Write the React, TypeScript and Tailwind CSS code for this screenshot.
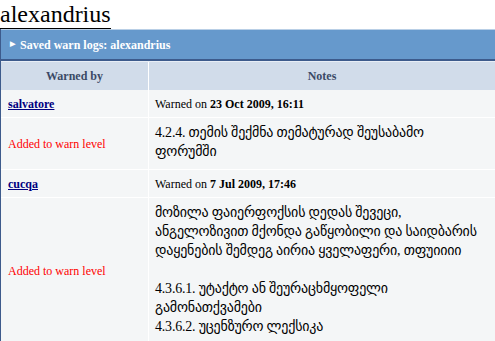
import React from 'react';

type Log = {
  user: string;
  date: string;
  notes: string[];
};

// note lines are kept as they wrap on the original page
const logs: Log[] = [
  {
    user: 'salvatore',
    date: '23 Oct 2009, 16:11',
    notes: ['4.2.4. თემის შექმნა თემატურად შეუსაბამო', 'ფორუმში'],
  },
  {
    user: 'cucqa',
    date: '7 Jul 2009, 17:46',
    notes: [
      'მოზილა ფაიერფოქსის დედას შევეცი,',
      'ანგელოზივით მქონდა გაწყობილი და საიდბარის',
      'დაყენების შემდეგ აირია ყველაფერი, თფუიიიი',
      '',
      '4.3.6.1. უტაქტო ან შეურაცხმყოფელი',
      'გამონათქვამები',
      '4.3.6.2. უცენზურო ლექსიკა',
    ],
  },
];

const serif = { fontFamily: '"Liberation Serif", "Times New Roman", serif' };
const georgian = {
  fontFamily: '"Liberation Serif", "DejaVu Sans", serif',
};

const App: React.FC = () => {
  return (
    <div className="min-h-screen w-full bg-white text-black overflow-hidden" style={serif}>
      <h1 className="inline-block text-[24px] leading-[28px] font-normal border-b border-black">alexandrius</h1>

      <div className="w-full border-l border-[#3d5b8c]">
        <div className="h-[32px] bg-[#6699cc] border-t border-[#b9cfe6] border-b-2 border-b-[#3d5b8c] flex items-center gap-[5px] pl-[9px] text-white text-[12px] font-bold">
          <span className="text-[7px] leading-none">▶</span>
          <span>Saved warn logs: alexandrius</span>
        </div>

        <div className="grid grid-cols-[148px_1fr] border-t border-[#e8eef6]">
          <div className="h-[28px] bg-[#d1dcea] border-r border-white flex items-center justify-center text-[12px] font-bold text-[#3b4a66]">
            Warned by
          </div>
          <div className="h-[28px] bg-[#d1dcea] flex items-center justify-center text-[12px] font-bold text-[#3b4a66]">
            Notes
          </div>

          {logs.map((log) => (
            <React.Fragment key={log.user}>
              <div className="bg-[#f4f6f7] border-r border-b border-white h-[28px] flex items-center pl-[7px]">
                <a href="#" className="text-[12px] font-bold text-[#000080] underline">{log.user}</a>
              </div>
              <div className="bg-[#f4f6f7] border-b border-white h-[28px] flex items-center pl-[6px] text-[12px]">
                <span>
                  Warned on <b>{log.date}</b>
                </span>
              </div>
              <div className="bg-[#f4f6f7] border-r border-b border-white flex items-center pl-[7px] text-[12px] text-[#ff0000]">
                Added to warn level
              </div>
              <div className="bg-[#f4f6f7] border-b border-white pl-[6px] pt-[5px] pb-[8px] text-[14px] leading-[19px] tracking-[-0.2px]" style={georgian}>
                {log.notes.map((n, i) => (
                  <p key={i} className="h-[19px] whitespace-nowrap">{n}</p>
                ))}
              </div>
            </React.Fragment>
          ))}
        </div>
      </div>
    </div>
  );
};

export default App;
